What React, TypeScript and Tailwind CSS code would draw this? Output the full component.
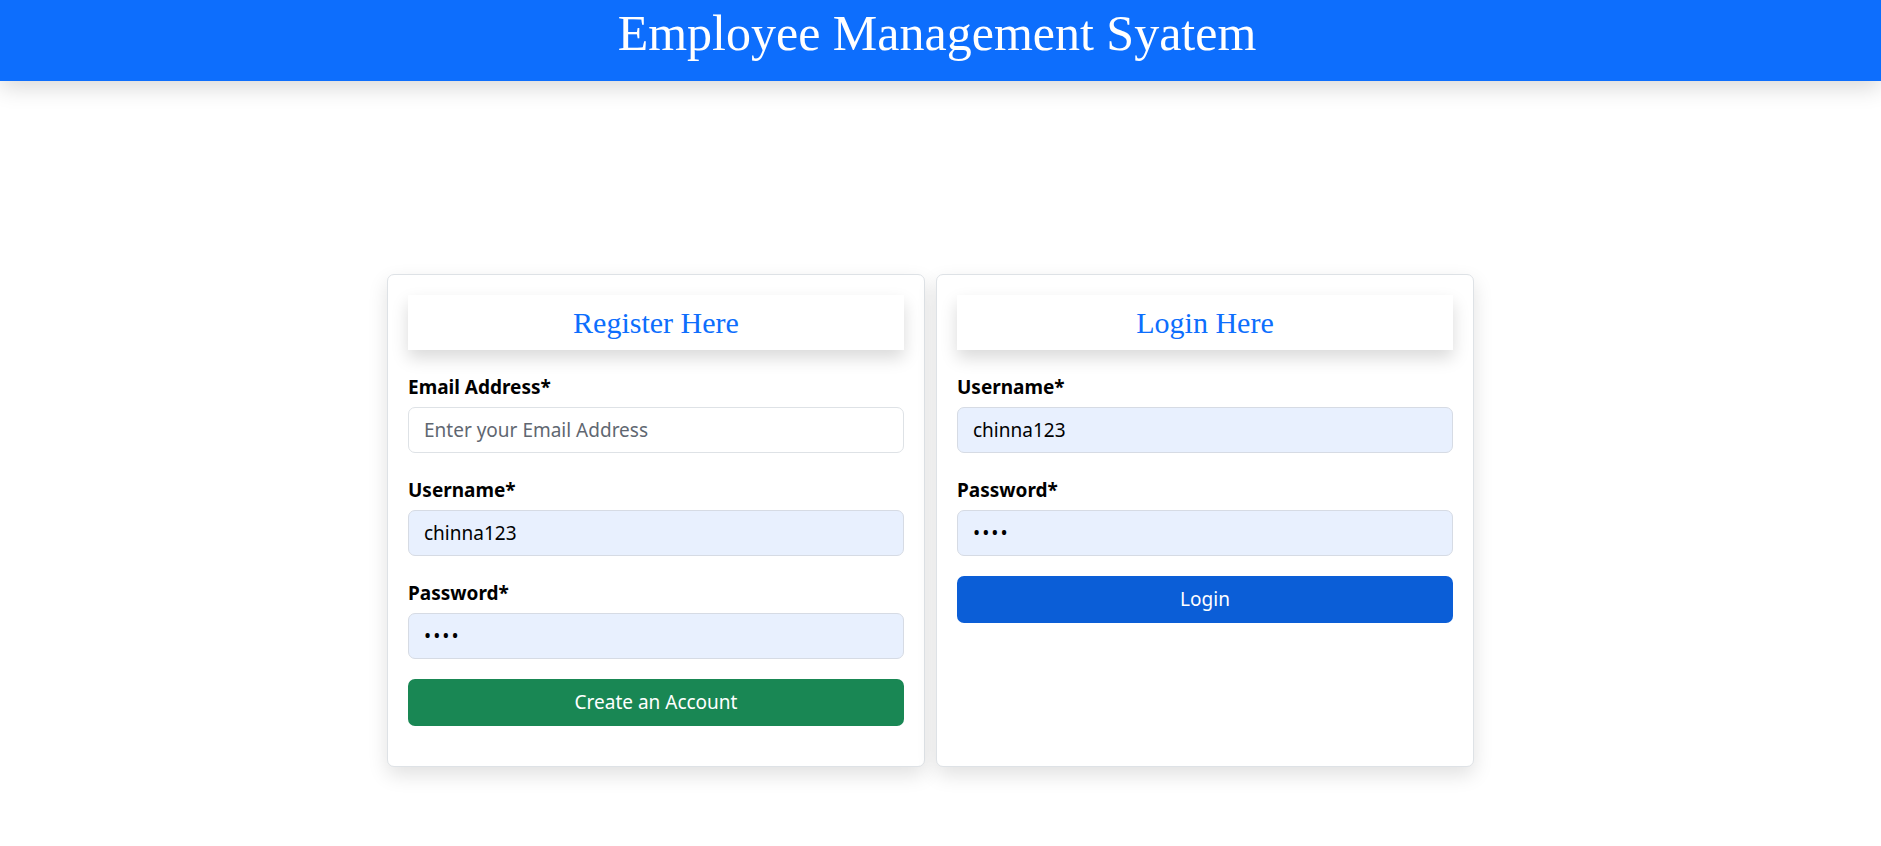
const fieldBase =
  'h-[46px] w-full rounded-[7px] border px-[15px] text-[19px] text-black outline-none';

function Field({
  label,
  value,
  placeholder,
  type = 'text',
}: {
  label: string;
  value?: string;
  placeholder?: string;
  type?: string;
}) {
  const filled = Boolean(value);
  return (
    <div className="mb-[20px] flex flex-col">
      <label className="mb-[6px] h-[31px] pt-[3px] text-[19px] font-bold leading-[29px] text-black">
        {label}
      </label>
      <input
        type={type}
        defaultValue={value}
        placeholder={placeholder}
        className={`${fieldBase} ${
          filled
            ? 'border-[#d6dbe4] bg-[#e8f0fe]'
            : 'border-[#dee2e6] bg-white placeholder:text-[#5f6771]'
        } ${type === 'password' ? 'tracking-[2px]' : ''}`}
      />
    </div>
  );
}

function FormCard({
  title,
  children,
}: {
  title: string;
  children: React.ReactNode;
}) {
  return (
    <div className="flex w-[538px] flex-col rounded-[7px] border border-[#dee2e6] bg-white p-[20px] pb-[40px] shadow-[0_8px_20px_rgba(0,0,0,0.12)]">
      <div className="mb-[20px] flex h-[55px] items-center justify-center bg-white shadow-[0_8px_16px_rgba(0,0,0,0.15)]">
        <h3 className="font-['Liberation_Serif',serif] text-[30px] leading-none text-[#0d6efd]">
          {title}
        </h3>
      </div>
      {children}
    </div>
  );
}

export default function App() {
  return (
    <div className="min-h-[846px] bg-white font-['Noto_Sans',sans-serif]">
      <header className="flex h-[81px] items-start justify-center bg-[#0d6efd] pr-[7px] shadow-[0_6px_22px_rgba(0,0,0,0.16)]">
        <h1 className="mt-[3px] font-['Liberation_Serif',serif] text-[50px] leading-[60px] text-white">
          Employee Management Syatem
        </h1>
      </header>

      <main className="flex justify-center gap-[11px] pr-[20px] pt-[193px]">
        <FormCard title="Register Here">
          <Field label="Email Address*" placeholder="Enter your Email Address" />
          <Field label="Username*" value="chinna123" />
          <Field label="Password*" value="1234" type="password" />
          <button className="h-[47px] w-full rounded-[7px] bg-[#198754] text-[19px] text-white">
            Create an Account
          </button>
        </FormCard>

        <FormCard title="Login Here">
          <Field label="Username*" value="chinna123" />
          <Field label="Password*" value="1234" type="password" />
          <button className="h-[47px] w-full rounded-[7px] bg-[#0b5ed7] text-[19px] text-white">
            Login
          </button>
        </FormCard>
      </main>
    </div>
  );
}
